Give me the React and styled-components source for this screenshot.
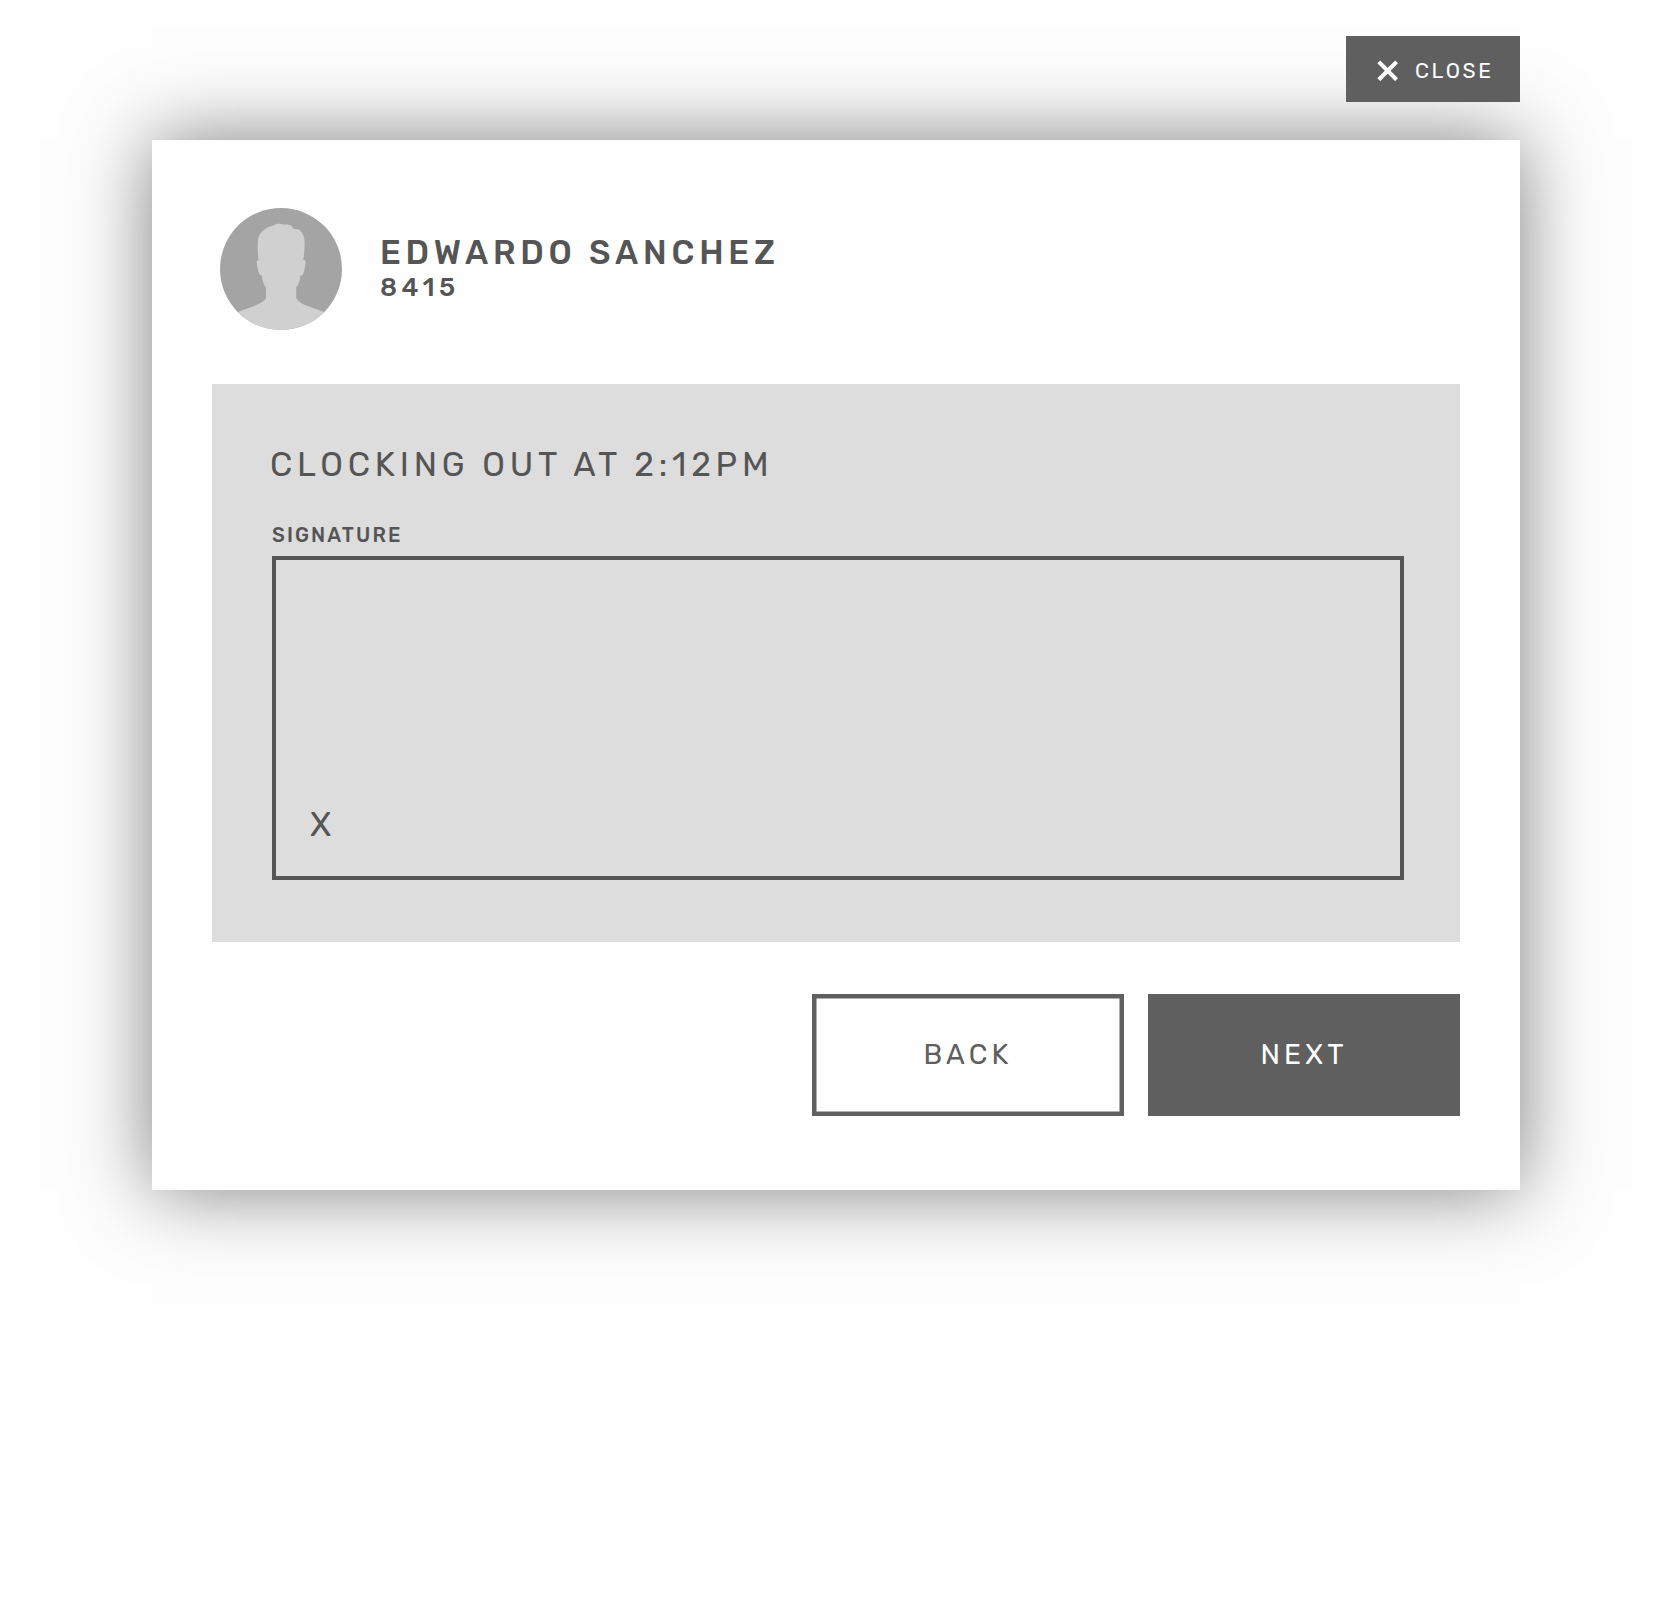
import React from "react";
import styled, { createGlobalStyle } from "styled-components";

const ink = "#555555";
const slate = "#5f5f5f";

const GlobalStyle = createGlobalStyle`
  *, *::before, *::after { box-sizing: border-box; }
  body {
    margin: 0;
    background: #fefefe;
    color: ${ink};
    font-family: Rubik, Roboto, "Liberation Sans", sans-serif;
  }
  button { font-family: inherit; cursor: pointer; }
`;

const Page = styled.main`
  display: flex;
  flex-direction: column;
  align-items: flex-end;
  gap: 38px;
  width: 1672px;
  min-height: 1600px;
  padding: 36px 152px 0;
`;

const CloseButton = styled.button`
  display: flex;
  align-items: center;
  gap: 16px;
  width: 174px;
  height: 66px;
  padding: 3px 0 0 31px;
  border: 0;
  background: ${slate};
  color: #fff;
  font-size: 21px;
  letter-spacing: 2.6px;
  z-index: 1;

  svg { flex: none; display: block; }
`;

const Card = styled.section`
  display: flex;
  flex-direction: column;
  width: 1368px;
  height: 1050px;
  padding: 68px 60px 74px;
  background: #fefefe;
  box-shadow: 0 0 76px rgba(0, 0, 0, 0.5);
`;

const Profile = styled.header`
  display: flex;
  align-items: center;
  gap: 38px;
  padding-left: 8px;
  margin-bottom: 54px;
`;

const Avatar = styled.svg`
  display: block;
  width: 122px;
  height: 122px;
`;

const Identity = styled.div`
  display: flex;
  flex-direction: column;
  font-weight: 500;
`;

const Name = styled.h1`
  margin: 0;
  font-size: 33.5px;
  font-weight: 500;
  line-height: 38px;
  letter-spacing: 4.78px;
`;

const EmployeeId = styled.span`
  font-size: 26px;
  line-height: 32px;
  letter-spacing: 4.5px;
`;

const Panel = styled.div`
  display: flex;
  flex-direction: column;
  height: 558px;
  padding: 61px 56px 62px 60px;
  margin-bottom: 52px;
  background: #dddddd;
`;

const Heading = styled.h2`
  margin: 0 0 38px -2px;
  font-size: 33.5px;
  font-weight: 400;
  line-height: 40px;
  letter-spacing: 4.76px;
`;

const FieldLabel = styled.label`
  font-size: 20px;
  font-weight: 500;
  line-height: 24px;
  letter-spacing: 2.1px;
`;

const SignaturePad = styled.div`
  display: flex;
  align-items: flex-end;
  height: 324px;
  margin-top: auto;
  padding: 0 34px 31px;
  border: 4px solid ${ink};
  font-size: 33.5px;
  line-height: 40px;
`;

const Actions = styled.footer`
  display: flex;
  justify-content: flex-end;
  gap: 24px;
`;

const ActionButton = styled.button`
  width: 312px;
  height: 122px;
  padding: 0 0 2px;
  border: 0;
  background: ${(p) => (p.$primary ? slate : "transparent")};
  box-shadow: inset 0 0 0 4.5px ${slate};
  color: ${(p) => (p.$primary ? "#fff" : slate)};
  font-size: 28px;
  letter-spacing: 4.2px;
`;

function CloseIcon() {
  return (
    <svg width="22" height="21" viewBox="0 0 22 21" fill="none" stroke="currentColor" strokeWidth="4.1">
      <path d="M1.8 1.9 19.6 19.7M19.6 1.9 1.8 19.7" />
    </svg>
  );
}

function AvatarSilhouette() {
  return (
    <Avatar viewBox="0 0 122 122" aria-hidden="true">
      <defs>
        <clipPath id="avatar-circle">
          <circle cx="61" cy="61" r="61" />
        </clipPath>
      </defs>
      <g clipPath="url(#avatar-circle)">
        <rect width="122" height="122" fill="#a4a4a4" />
        <path
          fill="#d0d0d0"
          d="M38.7 52.4C37.6 46 37.3 38 38 31.5C38.8 26 42.5 22.5 48 19.3C50.5 17.8 52.5 18.2 54 17.2C56.5 15.6 59 15.4 61.5 16C64 16.8 66.5 16.2 69 16.8C71 17.4 72.4 18.4 73.4 20.8C75 21.2 76.5 20.4 78.5 21.6C83 24.4 84.3 28.5 84.6 34C84.8 40 84 46.5 83.3 52C85.7 51.4 85.9 53.2 85.4 56C84.5 61 84.4 64.5 82.4 67.3C81.7 67.8 80.8 67.5 80.2 67.6C80 72.5 78.7 76.4 76.2 79.8V90.5C80.5 97.3 94.5 100 104.5 104.3L122 122H0L17.5 104.3C27.5 100 42 96.5 46 90.5V79.8C43.5 76.4 42.2 72.5 41.9 67.3C41.2 67.4 40.3 67.6 39.8 66.8C37.8 63 37.2 57.5 36.7 54.5C36.5 52.8 37.3 52.1 38.7 52.4Z"
        />
      </g>
    </Avatar>
  );
}

export default function App() {
  return (
    <>
      <GlobalStyle />
      <Page>
        <CloseButton type="button">
          <CloseIcon />
          CLOSE
        </CloseButton>
        <Card>
          <Profile>
            <AvatarSilhouette />
            <Identity>
              <Name>EDWARDO SANCHEZ</Name>
              <EmployeeId>8415</EmployeeId>
            </Identity>
          </Profile>
          <Panel>
            <Heading>CLOCKING OUT AT 2:12PM</Heading>
            <FieldLabel>SIGNATURE</FieldLabel>
            <SignaturePad>X</SignaturePad>
          </Panel>
          <Actions>
            <ActionButton type="button">BACK</ActionButton>
            <ActionButton type="button" $primary>NEXT</ActionButton>
          </Actions>
        </Card>
      </Page>
    </>
  );
}
